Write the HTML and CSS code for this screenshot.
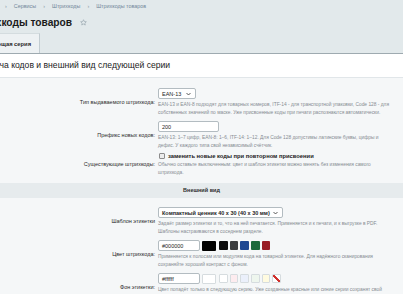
FILE: index.html
```html
<!DOCTYPE html>
<html lang="ru">

<head>
    <meta charset="UTF-8">
    <meta name="viewport" content="width=device-width, initial-scale=1.0">
    <title>Штрихкоды товаров</title>
    <link rel="stylesheet" href="styles.css">
</head>

<body>
    <!-- Шапка страницы -->
    <div class="header">
        <div class="crumbs">
            <span class="sep">›</span><span>Сервисы</span>
            <span class="sep">›</span><span>Штрихкоды</span>
            <span class="sep">›</span><span>Штрихкоды товаров</span>
        </div>
        <div class="title-row">
            <h1>Штрихкоды товаров</h1>
            <svg class="star" width="7" height="7" viewBox="0 0 24 24"><path d="M12 2.5l2.9 6.2 6.8.7-5.1 4.6 1.5 6.7L12 17.3l-6.1 3.4 1.5-6.7-5.1-4.6 6.8-.7z" fill="none" stroke="#8e9ca6" stroke-width="2" stroke-linejoin="round"/></svg>
        </div>
        <div class="tabs">
            <span class="tab">Следующая серия</span>
        </div>
    </div>

    <!-- Блок настроек -->
    <div class="block">
        <h2 class="block-title">Выдача кодов и внешний вид следующей серии</h2>
        <div class="block-body">
            <div class="form-row">
                <div class="row-label">Тип выдаваемого штрихкода:</div>
                <div class="row-input">
                    <div class="select select-short">EAN-13
                        <svg width="5" height="4" viewBox="0 0 10 6"><path d="M1 1l4 4 4-4" fill="none" stroke="#333" stroke-width="1.6"/></svg>
                    </div>
                    <p class="explain">EAN-13 и EAN-8 подходят для товарных номеров, ITF-14 - для транспортной упаковки, Code 128 - для собственных значений по маске. Уже присвоенные коды при печати распознаются автоматически.</p>
                </div>
            </div>

            <div class="form-row">
                <div class="row-label">Префикс новых кодов:</div>
                <div class="row-input">
                    <div class="input input-prefix">200</div>
                    <p class="explain">EAN-13: 1–7 цифр, EAN-8: 1–6, ITF-14: 1–12. Для Code 128 допустимы латинские буквы, цифры и дефис. У каждого типа свой независимый счётчик.</p>
                </div>
            </div>

            <div class="form-row form-row-check">
                <div class="row-label">Существующие штрихкоды:</div>
                <div class="row-input">
                    <div class="check"><span class="check-box"></span>заменить новые коды при повторном присвоении</div>
                    <p class="explain">Обычно оставьте выключенным: цвет и шаблон этикетки можно менять без изменения самого штрихкода.</p>
                </div>
            </div>

            <div class="form-section">Внешний вид</div>

            <div class="form-row">
                <div class="row-label">Шаблон этикетки</div>
                <div class="row-input">
                    <div class="select select-long">Компактный ценник 40 x 30 (40 x 30 мм)
                        <svg width="5" height="4" viewBox="0 0 10 6"><path d="M1 1l4 4 4-4" fill="none" stroke="#333" stroke-width="1.6"/></svg>
                    </div>
                    <p class="explain">Задаёт размер этикетки и то, что на ней печатается. Применяется и к печати, и к выгрузке в PDF. Шаблоны настраиваются в соседнем разделе.</p>
                </div>
            </div>

            <div class="form-row">
                <div class="row-label">Цвет штрихкода:</div>
                <div class="row-input">
                    <div class="color-line">
                        <div class="input input-color">#000000</div>
                        <span class="swatch-big" style="background:#000000"></span>
                        <span class="swatch" style="background:#0d0d0d"></span>
                        <span class="swatch" style="background:#3b3d3f"></span>
                        <span class="swatch" style="background:#1d4691"></span>
                        <span class="swatch" style="background:#1c6a3c"></span>
                        <span class="swatch" style="background:#981c24"></span>
                    </div>
                    <p class="explain">Применяется к полосам или модулям кода на товарной этикетке. Для надёжного сканирования сохраняйте хороший контраст с фоном.</p>
                </div>
            </div>

            <div class="form-row">
                <div class="row-label">Фон этикетки:</div>
                <div class="row-input">
                    <div class="color-line">
                        <div class="input input-color">#ffffff</div>
                        <span class="swatch-big swatch-light" style="background:#ffffff"></span>
                        <span class="swatch swatch-light" style="background:#ffffff"></span>
                        <span class="swatch swatch-light" style="background:#fdecef"></span>
                        <span class="swatch swatch-light" style="background:#ebf0fb"></span>
                        <span class="swatch swatch-light" style="background:#eef6ee"></span>
                        <span class="swatch swatch-light" style="background:#fffbe0"></span>
                        <span class="swatch swatch-none"></span>
                    </div>
                    <p class="explain">Цвет попадёт только в следующую серию. Уже созданные красные или синие серии сохранят свой оформление при повторной печати.</p>
                </div>
            </div>
        </div>
    </div>
</body>

</html>
```

FILE: styles.css
```css
body {
    margin: 0;
    font-family: 'Liberation Sans', Arial, sans-serif;
    color: #222;
    background-color: #f5f7f8;
    overflow: hidden;
}

/* Шапка */
.header {
    display: flex;
    flex-direction: column;
    height: 53px;
    background-color: #e2e9eb;
    border-bottom: 1px solid #9eaab0;
}

.crumbs {
    display: flex;
    align-items: center;
    gap: 7px;
    height: 12px;
    padding-left: 5px;
    font-size: 5.4px;
    color: #71869a;
}

.crumbs .sep {
    color: #8797a3;
}

.title-row {
    display: flex;
    align-items: center;
    gap: 8px;
    height: 21px;
}

.title-row h1 {
    margin: 0 0 0 -32px;
    font-size: 10.2px;
    font-weight: bold;
    color: #1a1a1a;
}

.tabs {
    display: flex;
    height: 20px;
}

.tab {
    display: flex;
    align-items: center;
    margin-left: -30px;
    padding: 0 8px;
    background-color: #edf1f3;
    border-top: 1px solid #d4dcdf;
    border-right: 1px solid #c2ccd1;
    font-size: 5.8px;
    font-weight: bold;
    color: #2a2a2a;
}

/* Блок */
.block-title {
    margin: 0;
    height: 23px;
    line-height: 23px;
    text-indent: -22px;
    background-color: #fff;
    border-bottom: 1px solid #e1e6e9;
    font-size: 8.6px;
    font-weight: normal;
    color: #1c1c1c;
}

.block-body {
    padding-top: 10px;
}

.form-row {
    display: grid;
    grid-template-columns: 155px 1fr;
    column-gap: 3px;
    align-items: center;
    padding-bottom: 5px;
}

.form-row-check {
    margin-top: -2px;
}

.row-label {
    text-align: right;
    font-size: 5.5px;
    color: #2b2b2b;
}

.explain {
    margin: 2px 0 0;
    max-width: 234px;
    font-size: 4.85px;
    line-height: 7.5px;
    color: #868c92;
}

.select,
.input {
    display: flex;
    align-items: center;
    box-sizing: border-box;
    height: 11px;
    background-color: #fff;
    border: 1px solid #b3bcc1;
    border-radius: 2px;
    font-size: 5.5px;
    color: #1e1e1e;
}

.select {
    justify-content: space-between;
    padding: 0 4px 0 3px;
}

.select-short {
    width: 38px;
}

.select-long {
    width: 125px;
    font-weight: bold;
}

.input {
    padding: 0 3px;
}

.input-prefix {
    width: 61px;
}

.input-color {
    width: 42px;
}

.check {
    display: flex;
    align-items: center;
    gap: 3px;
    height: 7px;
    padding-left: 1px;
    font-size: 5.8px;
    font-weight: bold;
    color: #222;
}

.check-box {
    width: 6px;
    height: 6px;
    box-sizing: border-box;
    border: 1px solid #8c8c8c;
    border-radius: 1px;
    background-color: #ececec;
}

.form-section {
    margin: 2px 0 9px;
    height: 15px;
    line-height: 15px;
    text-align: center;
    background-color: #e6ebed;
    font-size: 5.5px;
    font-weight: bold;
    color: #2d2d2d;
}

/* Цвета */
.color-line {
    display: flex;
    align-items: center;
}

.swatch-big {
    width: 14px;
    height: 10px;
    margin: 0 3px 0 2px;
    box-sizing: border-box;
    border-radius: 1px;
}

.swatch {
    width: 8.5px;
    height: 9px;
    margin-right: 2.2px;
    box-sizing: border-box;
    border-radius: 1px;
}

.swatch-light {
    border: 1px solid #d6dcdf;
}

.swatch-none {
    border: 1px solid #d6dcdf;
    background: linear-gradient(to top right, #fff 42%, #d0312d 42%, #d0312d 58%, #fff 58%);
}
```
